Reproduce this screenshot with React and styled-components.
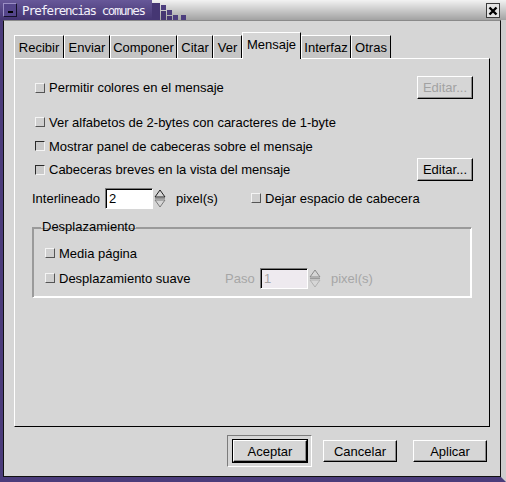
import React from 'react';
import styled, { createGlobalStyle } from 'styled-components';

const purple = '#4b3c7b';
const face = '#d6d6d6';

const GlobalStyle = createGlobalStyle`
  html, body {
    margin: 0;
    padding: 0;
    background: ${face};
  }
  body {
    font-family: 'Liberation Sans', Arial, sans-serif;
    font-size: 13px;
    color: #000;
  }
`;

const Window = styled.div`
  width: 506px;
  height: 482px;
  display: flex;
  flex-direction: column;
  background: ${purple};
  overflow: hidden;
`;

const TitleBar = styled.div`
  height: 20px;
  flex-shrink: 0;
  display: flex;
  align-items: stretch;
  background: linear-gradient(#f2f2f2, #a2a2a2);
`;

const TitleStrip = styled.div`
  width: 152px;
  box-sizing: border-box;
  display: flex;
  align-items: center;
  gap: 5px;
  padding-left: 3px;
  background: linear-gradient(#675899, #443572);
`;

const MinButton = styled.div`
  width: 14px;
  height: 14px;
  box-sizing: border-box;
  border: 1px solid;
  border-color: #9a8ec4 #15102a #15102a #9a8ec4;
  background: #54458a;
  display: flex;
  align-items: flex-end;
  padding: 0 0 3px 4px;

  span {
    width: 5px;
    height: 2px;
    background: #000;
  }
`;

const TitleText = styled.span`
  color: #f2f0fa;
  font-family: 'DejaVu Sans Mono', 'Liberation Mono', monospace;
  font-size: 12.5px;
  letter-spacing: -1.4px;
  white-space: nowrap;
`;

const Spacer = styled.div`
  flex: 1;
`;

const CloseButton = styled.div`
  width: 14px;
  height: 15px;
  margin: 3px 6px 0 0;
  box-sizing: border-box;
  border: 1px solid #3a3a3a;
  background: #e4e4e4;
  display: flex;
  align-items: center;
  justify-content: center;
`;

const Frame = styled.div`
  flex: 1;
  display: flex;
  border-left: 3px solid ${purple};
  border-bottom: 5px solid ${purple};
  border-right: 5px solid #cdcdcd;
`;

const Body = styled.div`
  flex: 1;
  display: flex;
  flex-direction: column;
  background: ${face};
  border-top: 1px solid #8a8a8a;
  border-left: 1px solid #111;
  border-right: 1px solid #111;
  border-bottom: 1px solid #111;
  padding: 11px 10px 0 10px;
`;

const TabRow = styled.div`
  height: 26px;
  display: flex;
  align-items: flex-end;
`;

const Tab = styled.div`
  position: relative;
  z-index: ${(p) => (p.$active ? 1 : 0)};
  width: ${(p) => p.$w}px;
  height: ${(p) => (p.$active ? '27px' : '23px')};
  margin-bottom: ${(p) => (p.$active ? '-1px' : '0')};
  box-sizing: border-box;
  display: flex;
  align-items: center;
  justify-content: center;
  padding-bottom: ${(p) => (p.$active ? '3px' : '0')};
  background: ${(p) => (p.$active ? face : '#c5c5c5')};
  border-top: 1px solid #fff;
  border-left: 1px solid #fff;
  border-right: 1px solid #000;
  font-size: 13px;
  white-space: nowrap;
`;

const Panel = styled.div`
  height: 369px;
  box-sizing: border-box;
  display: flex;
  flex-direction: column;
  border-top: 1px solid #fff;
  border-left: 1px solid #fff;
  border-right: 1px solid #000;
  border-bottom: 1px solid #000;
  padding: 0 16px 0 17px;
`;

const Row = styled.div`
  height: ${(p) => p.$h || 20}px;
  margin-top: ${(p) => p.$top || 0}px;
  display: flex;
  align-items: center;
  padding-left: ${(p) => p.$indent || 0}px;
  white-space: nowrap;
`;

const Check = styled.span`
  width: 10px;
  height: 10px;
  box-sizing: border-box;
  flex-shrink: 0;
  margin-right: 4px;
  border: 1px solid;
  border-color: ${(p) =>
    p.$checked ? '#2a2a2a #f4f4f4 #f4f4f4 #2a2a2a' : '#f4f4f4 #555 #555 #f4f4f4'};
  background: ${(p) => (p.$checked ? '#cacaca' : '#cfcfcf')};
`;

const CheckLabel = styled.label`
  display: flex;
  align-items: center;
  width: ${(p) => (p.$w ? `${p.$w}px` : 'auto')};
  flex-shrink: 0;
`;

const Button = styled.button`
  width: ${(p) => p.$w || 74}px;
  height: ${(p) => p.$h || 22}px;
  margin-left: ${(p) => p.$ml || 0}px;
  box-sizing: border-box;
  padding: 0;
  background: ${face};
  border: 1px solid;
  border-color: #fff #000 #000 #fff;
  box-shadow: inset -1px -1px #8c8c8c;
  font-family: 'Liberation Sans', Arial, sans-serif;
  font-size: 13px;
  color: ${(p) => (p.disabled ? '#a2a2a2' : '#000')};
  outline: ${(p) => (p.$default ? '1px solid #000' : 'none')};
`;

const DefaultFrame = styled.div`
  padding: 4px 4px 4px 5px;
  border: 1px solid;
  border-color: #7c7c7c #fff #fff #7c7c7c;
  display: flex;
`;

const Push = styled.div`
  flex: 1;
`;

const Label = styled.span`
  width: ${(p) => (p.$w ? `${p.$w}px` : 'auto')};
  flex-shrink: 0;
  color: ${(p) => (p.$dim ? '#a6a6a6' : '#000')};
`;

const Entry = styled.div`
  width: 48px;
  height: 21px;
  box-sizing: border-box;
  border: 1px solid;
  border-color: #7a7a7a #fff #fff #7a7a7a;
  box-shadow: inset 1px 1px #000;
  background: ${(p) => (p.$dim ? '#eeeaef' : '#fff')};
  color: ${(p) => (p.$dim ? '#a6a6a6' : '#000')};
  padding: 2px 0 0 3px;
  font-size: 13px;
`;

const SpinBox = styled.svg`
  margin: 0 ${(p) => p.$gap || 10}px 0 1px;
  flex-shrink: 0;
`;

const Group = styled.fieldset`
  margin: 11px 1px 0 0;
  padding: 9px 0 8px 12px;
  border: 1px solid;
  border-color: #9a9a9a #fff #fff #9a9a9a;
  box-shadow: 1px 1px 0 #9a9a9a inset, inset -1px -1px #fff;
  min-inline-size: 0;

  legend {
    margin-left: -4px;
    padding: 0 1px;
    line-height: 14px;
    font-size: 13px;
  }
`;

const ButtonRow = styled.div`
  height: 32px;
  margin-top: 8px;
  padding-right: 3px;
  display: flex;
  align-items: center;
  justify-content: flex-end;
`;

const Spin = ({ dim, gap }) => (
  <SpinBox $gap={gap} width="12" height="21" viewBox="0 0 12 21">
    <polygon points="6,2 11,9 1,9" fill={face} stroke={dim ? '#8a8a8a' : '#222'} strokeWidth="1" />
    <line x1="1" y1="10.5" x2="11" y2="10.5" stroke="#9a9a9a" />
    <polygon points="1,12 11,12 6,19" fill={face} stroke={dim ? '#b0b0b0' : '#7a7a7a'} strokeWidth="1" />
  </SpinBox>
);

const tabs = [
  ['Recibir', 50],
  ['Enviar', 46],
  ['Componer', 67],
  ['Citar', 36],
  ['Ver', 29],
  ['Mensaje', 59],
  ['Interfaz', 50],
  ['Otras', 40],
];

const App = () => (
  <Window>
    <GlobalStyle />
    <TitleBar>
      <TitleStrip>
        <MinButton>
          <span />
        </MinButton>
        <TitleText>Preferencias comunes</TitleText>
      </TitleStrip>
      <svg width="40" height="20" viewBox="0 0 40 20">
        <rect x="0" y="3" width="8" height="17" fill="#453673" />
        <rect x="9" y="5" width="5" height="5" fill="#4d3e7e" />
        <rect x="9" y="11" width="5" height="9" fill="#453673" />
        <rect x="15" y="10" width="5" height="5" fill="#4d3e7e" />
        <rect x="15" y="16" width="5" height="4" fill="#453673" />
        <rect x="21" y="15" width="5" height="5" fill="#4d3e7e" />
        <rect x="29" y="15" width="5" height="5" fill="#4d3e7e" />
      </svg>
      <Spacer />
      <CloseButton>
        <svg width="10" height="10" viewBox="0 0 10 10">
          <path d="M1.5 1.5 L8.5 8.5 M8.5 1.5 L1.5 8.5" stroke="#000" strokeWidth="2.4" />
        </svg>
      </CloseButton>
    </TitleBar>
    <Frame>
      <Body>
        <TabRow>
          {tabs.map(([t, w]) => (
            <Tab key={t} $w={w} $active={t === 'Mensaje'}>
              {t}
            </Tab>
          ))}
        </TabRow>
        <Panel>
          <Row $h={23} $top={17} $indent={3}>
            <CheckLabel>
              <Check />
              Permitir colores en el mensaje
            </CheckLabel>
            <Push />
            <Button disabled $w={56} $h={23}>
              Editar...
            </Button>
          </Row>
          <Row $top={13} $indent={3}>
            <CheckLabel>
              <Check />
              Ver alfabetos de 2-bytes con caracteres de 1-byte
            </CheckLabel>
          </Row>
          <Row $top={4} $indent={3}>
            <CheckLabel>
              <Check $checked />
              Mostrar panel de cabeceras sobre el mensaje
            </CheckLabel>
          </Row>
          <Row $h={23} $top={2} $indent={3}>
            <CheckLabel>
              <Check $checked />
              Cabeceras breves en la vista del mensaje
            </CheckLabel>
            <Push />
            <Button $w={56} $h={23}>
              Editar...
            </Button>
          </Row>
          <Row $h={22} $top={6}>
            <Label $w={73}>Interlineado</Label>
            <Entry>2</Entry>
            <Spin gap={10} />
            <Label $w={75}>pixel(s)</Label>
            <CheckLabel>
              <Check />
              Dejar espacio de cabecera
            </CheckLabel>
          </Row>
          <Group>
            <legend>Desplazamiento</legend>
            <Row>
              <CheckLabel>
                <Check />
                Media página
              </CheckLabel>
            </Row>
            <Row $h={22} $top={4}>
              <CheckLabel $w={180}>
                <Check />
                Desplazamiento suave
              </CheckLabel>
              <Label $w={35} $dim>
                Paso
              </Label>
              <Entry $dim>1</Entry>
              <Spin dim gap={10} />
              <Label $dim>pixel(s)</Label>
            </Row>
          </Group>
        </Panel>
        <ButtonRow>
          <DefaultFrame>
            <Button $default>Aceptar</Button>
          </DefaultFrame>
          <Button $ml={11}>Cancelar</Button>
          <Button $ml={16}>Aplicar</Button>
        </ButtonRow>
      </Body>
    </Frame>
  </Window>
);

export default App;
